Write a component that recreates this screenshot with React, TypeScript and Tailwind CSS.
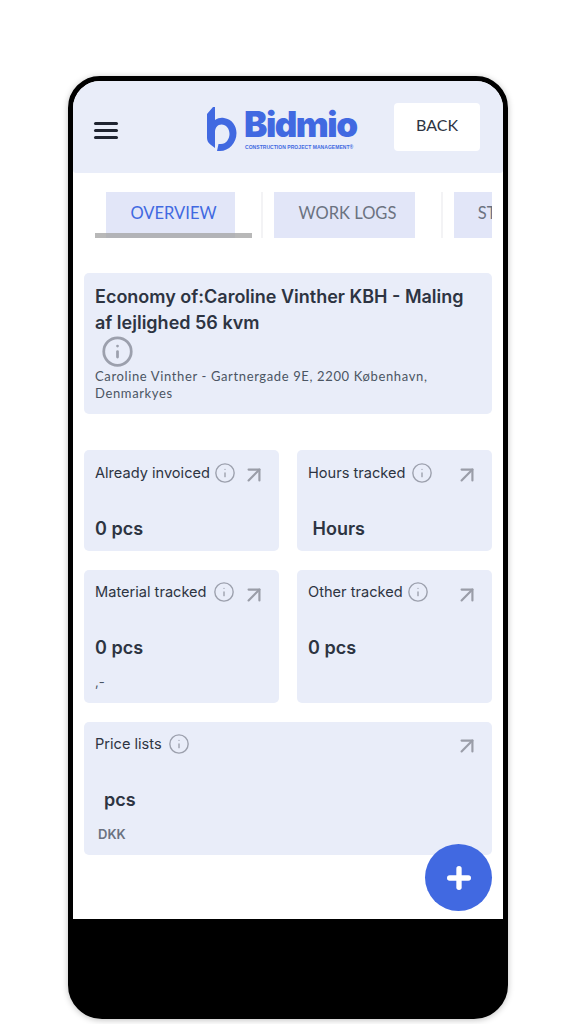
import { Info, ArrowUpRight, Plus } from 'lucide-react'

const inter = { fontFamily: 'Inter, sans-serif' }

function Logo() {
  return (
    <div className="flex items-start">
      <svg width="31" height="46" viewBox="0 0 31 46" className="shrink-0">
        <path
          d="M1 8 L7 1 L9 1 L9 14 C12 12 15 11.5 18 12 C26 13 30.5 20 30.5 27 C30.5 37 23 45 14 45 L11 45 L12.5 38 L15 38 C20 38 23.5 33 23.5 28 C23.5 22.5 20 18.5 15.5 18.5 C11.5 18.5 9 22 9 26 L9 42 L5 39 C2.5 37 1 35 1 32 Z"
          fill="#4169e1"
        />
      </svg>
      <div className="ml-[7px] flex flex-col">
        <span className="font-['Inter'] text-[35px] leading-[36px] font-black tracking-[-1.5px] text-[#4169e1]">
          Bidmio
        </span>
        <span className="mt-[2px] ml-[1px] font-['Liberation_Sans'] text-[5px] leading-[6px] font-bold tracking-[0.05px] whitespace-nowrap text-[#4169e1]">
          CONSTRUCTION PROJECT MANAGEMENT®
        </span>
      </div>
    </div>
  )
}

function Tab({ label, active, width, gap }: { label: string; active?: boolean; width: number; gap: number }) {
  return (
    <div className="flex h-[46px] shrink-0">
      <div
        className={`flex h-full items-center justify-center bg-[#e2e6f8] pb-[3px] pl-[6px] font-['Lato'] text-[16.5px] ${active ? 'text-[#4169e1]' : 'text-[#6b7280]'}`}
        style={{ width }}
      >
        {label}
      </div>
      <div className="h-full border-r-2 border-[#f3f3f5] bg-white" style={{ width: gap }} />
      <div className="h-full w-[11px] bg-white" />
    </div>
  )
}

function StatCard({
  label,
  value,
  infoGap,
  className,
}: {
  label: string
  value: string
  infoGap: number
  className: string
}) {
  return (
    <div className={`relative rounded-[5px] bg-[#e9edf9] pl-[11px] ${className}`} style={inter}>
      <div className="flex items-center text-[14.6px] leading-[22px] text-[#2d3442]">
        <span>{label}</span>
        <Info size={22} strokeWidth={1.5} className="text-[#9ca0ad]" style={{ marginLeft: infoGap }} />
      </div>
      <ArrowUpRight size={26} strokeWidth={2} className="absolute top-[12px] right-[12px] text-[#9a9da8]" />
      <div className="mt-[33px] text-[18px] leading-[24px] font-semibold whitespace-pre text-[#2d3442]">{value}</div>
    </div>
  )
}

export default function App() {
  return (
    <div className="h-[1024px] w-[576px] overflow-hidden bg-white pt-[76px] pl-[68px]">
      <div className="h-[943px] w-[440px] overflow-hidden rounded-t-[32px] rounded-b-[34px] border-[5px] border-black bg-black shadow-[0_1px_6px_rgba(0,0,0,0.25)]">
        <div className="relative flex h-[838px] flex-col bg-white">
          <header className="flex h-[92px] shrink-0 items-start rounded-b-[3px] bg-[#e9edf9]">
            <div className="mt-[41px] ml-[21px] flex w-[24px] flex-col gap-[4px]">
              <span className="h-[3px] rounded-full bg-[#1f2430]" />
              <span className="h-[3px] rounded-full bg-[#1f2430]" />
              <span className="h-[3px] rounded-full bg-[#1f2430]" />
            </div>
            <div className="mt-[25px] ml-[88px] w-[188px]">
              <Logo />
            </div>
            <button
              type="button"
              className="mt-[22px] flex h-[48px] w-[86px] items-center justify-center rounded-[4px] bg-white pb-[4px] font-['Lato'] text-[16px] text-[#2d3442]"
            >
              BACK
            </button>
          </header>

          <div className="relative mt-[19px] ml-[22px] h-[46px] w-[397px] overflow-hidden">
            <div className="flex pl-[11px]">
              <Tab label="OVERVIEW" active width={129} gap={28} />
              <Tab label="WORK LOGS" width={141} gap={28} />
              <Tab label="STATUS" width={100} gap={20} />
            </div>
            <div className="absolute bottom-0 left-0 h-[5px] w-[157px] bg-[#a6a6a6] opacity-80" />
          </div>

          <div className="mt-[35px] flex flex-col px-[11px]">
            <section className="h-[141px] rounded-[5px] bg-[#e9edf9] pt-[11px] pl-[11px]">
              <h1 className="text-[18px] leading-[26px] font-semibold text-[#2d3442]" style={inter}>
                Economy of:Caroline Vinther KBH - Maling
                <br />
                af lejlighed 56 kvm
              </h1>
              <Info size={33} strokeWidth={2} className="mt-[-1px] ml-[6px] text-[#9ca0ad]" />
              <p className="font-['Lato'] text-[13px] leading-[17px] tracking-[0.63px] text-[#4b5563]">
                Caroline Vinther - Gartnergade 9E, 2200 København,
                <br />
                Denmarkyes
              </p>
            </section>

            <div className="mt-[36px] grid grid-cols-[195px_195px] gap-x-[18px] gap-y-[19px]">
              <StatCard label="Already invoiced" value="0 pcs" infoGap={4} className="h-[101px] pt-[12px]" />
              <StatCard label="Hours tracked" value=" Hours" infoGap={6} className="h-[101px] pt-[12px]" />
              <div className="relative h-[133px]">
                <StatCard label="Material tracked" value="0 pcs" infoGap={6} className="h-full pt-[11px]" />
                <span className="absolute top-[103px] left-[11px] text-[13px] leading-[18px] text-[#4b5563]" style={inter}>
                  ,-
                </span>
              </div>
              <StatCard label="Other tracked" value="0 pcs" infoGap={4} className="h-[133px] pt-[11px]" />
            </div>

            <div className="relative mt-[19px] h-[133px] rounded-[5px] bg-[#e9edf9] pt-[11px] pl-[11px]" style={inter}>
              <div className="flex items-center text-[14.6px] leading-[22px] text-[#2d3442]">
                <span>Price lists</span>
                <Info size={22} strokeWidth={1.5} className="ml-[6px] text-[#9ca0ad]" />
              </div>
              <ArrowUpRight size={26} strokeWidth={2} className="absolute top-[11px] right-[12px] text-[#9a9da8]" />
              <div className="mt-[33px] ml-[9px] text-[18px] leading-[24px] font-semibold text-[#2d3442]">pcs</div>
              <div className="mt-[13px] ml-[3px] text-[13px] leading-[18px] font-semibold text-[#6b7280]">DKK</div>
            </div>
          </div>

          <button
            type="button"
            aria-label="Add"
            className="absolute top-[763px] left-[352px] flex h-[67px] w-[67px] items-center justify-center rounded-full bg-[#4169e1]"
          >
            <Plus size={32} strokeWidth={4} className="text-white" />
          </button>
        </div>
      </div>
    </div>
  )
}
